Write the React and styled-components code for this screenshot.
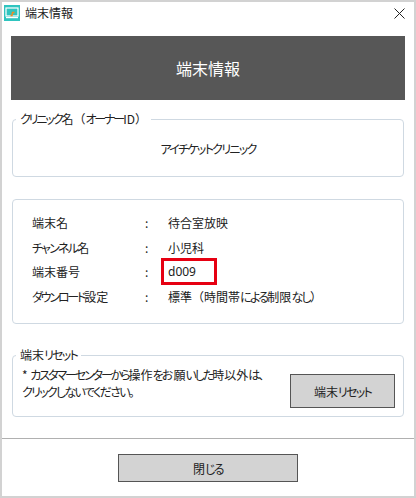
import React from "react";
import styled, { createGlobalStyle } from "styled-components";

const Global = createGlobalStyle`
  html, body { margin: 0; padding: 0; background: #fff; }
  body { font-family: "Noto Sans CJK JP", "Noto Sans", sans-serif; font-size: 12px; color: #222; }
  * { box-sizing: border-box; }
`;

const Win = styled.div`
  width: 416px; height: 498px;
  border: 2px solid #d2d2d2;
  display: flex; flex-direction: column; background: #fff;
`;
const TitleBar = styled.div`
  height: 22px; padding: 0 0 0 2px;
  display: flex; align-items: center; gap: 5px; position: relative;
  font-size: 12px; line-height: 20px;
`;
const TitleText = styled.span`
  margin-top: -1px;
`;
const CloseIcon = styled.svg`
  position: absolute; right: 9px; top: 6px; width: 11px; height: 11px;
`;
const Content = styled.div`
  display: flex; flex-direction: column;
  padding: 12px 9px 0 9px;
`;
const Banner = styled.div`
  height: 64px; background: #575757; color: #fff;
  display: flex; align-items: center; justify-content: center;
  font-size: 16px;
`;
const Group = styled.fieldset`
  margin: ${p => p.$top}px 1px 0 1px; padding: 0; min-width: 0;
  height: ${p => p.$h}px;
  border: 1px solid #cfd9e2; border-radius: 4px;
`;
const Legend = styled.legend`
  margin-left: 3px; padding: 0 4px; font-size: 12px; line-height: 16px; color: #222;
`;
const ClinicName = styled.div`
  text-align: center; font-size: 12px; line-height: 16px; padding-top: 14px;
`;
const InfoList = styled.div`
  display: grid; grid-template-columns: 113px 23px 1fr;
  grid-auto-rows: 24.7px; align-items: center;
  padding: 10px 0 0 19px; font-size: 12px;
`;
const Colon = styled.span``;
const Value = styled.span`
  display: flex; align-items: center;
`;
const Highlight = styled.span`
  display: flex; align-items: center;
  width: 56px; height: 27px; margin-left: -7px; padding-left: 4px;
  border: 3px solid #e60012;
  font-family: "Noto Sans", sans-serif;
`;
const ResetRow = styled.div`
  display: flex; justify-content: space-between; padding: 0 8px 0 9px;
`;
const Note = styled.div`
  line-height: 17px; font-size: 12px; margin-top: 3px;
`;
const GrayButton = styled.button`
  width: ${p => p.$w}px; height: ${p => p.$h}px;
  background: #d3d3d3; border: 1px solid #555; border-radius: 0;
  font: inherit; font-size: 12px; color: #222; padding: 0;
`;
const ResetButton = styled(GrayButton)`
  margin-top: 11px;
`;
const Footer = styled.div`
  margin-top: 21px; border-top: 1px solid #b0b0b0; flex: 1;
  display: flex; justify-content: center; padding: 15px 0 0 0;
`;
const Kana = styled.span`
  font-feature-settings: "palt";
  letter-spacing: ${p => p.$ls ?? -1.7}px;
`;

const T = ({ children, ls }) =>
  children.split(/([\u3041-\u30ff]+)/).map((part, i) =>
    /^[\u3041-\u30ff]/.test(part) ? <Kana key={i} $ls={ls}>{part}</Kana> : part
  );

const AppIcon = () => (
  <svg width="16" height="16" viewBox="0 0 16 16" style={{ flex: "none" }}>
    <rect width="16" height="16" fill="#2fc4bf" />
    <rect x="2" y="3" width="12" height="8" fill="none" stroke="#fff" strokeWidth="1.2" />
    <rect x="2" y="12" width="12" height="1.2" fill="#fff" />
    <path d="M6.5 10.5 H8 L8.5 7.5 H10.5" stroke="#f58a1f" strokeWidth="1.4" fill="none" />
  </svg>
);

const rows = [
  ["端末名", "待合室放映"],
  ["チャンネル名", "小児科"],
  ["端末番号", "d009", true],
  ["ダウンロード設定", "標準（時間帯による制限なし）"],
];

export default function App() {
  return (
    <>
      <Global />
      <Win>
        <TitleBar>
          <AppIcon />
          <TitleText>端末情報</TitleText>
          <CloseIcon viewBox="0 0 11 11">
            <path d="M0.5 0.5 L10.5 10.5 M10.5 0.5 L0.5 10.5" stroke="#222" strokeWidth="1" fill="none" />
          </CloseIcon>
        </TitleBar>
        <Content>
          <Banner>端末情報</Banner>
          <Group $top={11} $h={66}>
            <Legend><T ls={-2.1}>クリニック名（オーナーID）</T></Legend>
            <ClinicName><T>アイチケットクリニック</T></ClinicName>
          </Group>
          <Group $top={22} $h={125}>
            <InfoList>
              {rows.map(([label, value, hl]) => (
                <React.Fragment key={label}>
                  <span><T ls={label.length > 6 ? -2.2 : undefined}>{label}</T></span>
                  <Colon>:</Colon>
                  <Value>{hl ? <Highlight>{value}</Highlight> : <span><T>{value}</T></span>}</Value>
                </React.Fragment>
              ))}
            </InfoList>
          </Group>
          <Group $top={23} $h={70}>
            <Legend><T>端末リセット</T></Legend>
            <ResetRow>
              <Note>
                * <T ls={-2.1}>カスタマーセンターから</T>操作<T ls={-2.1}>を</T>お願<T ls={-2.1}>いした</T>時以外<T ls={-2.1}>は、</T>
                <br />
                <T>クリックしないでください。</T>
              </Note>
              <ResetButton $w={105} $h={34}><T>端末リセット</T></ResetButton>
            </ResetRow>
          </Group>
        </Content>
        <Footer>
          <GrayButton $w={180} $h={28}>閉<T>じる</T></GrayButton>
        </Footer>
      </Win>
    </>
  );
}
